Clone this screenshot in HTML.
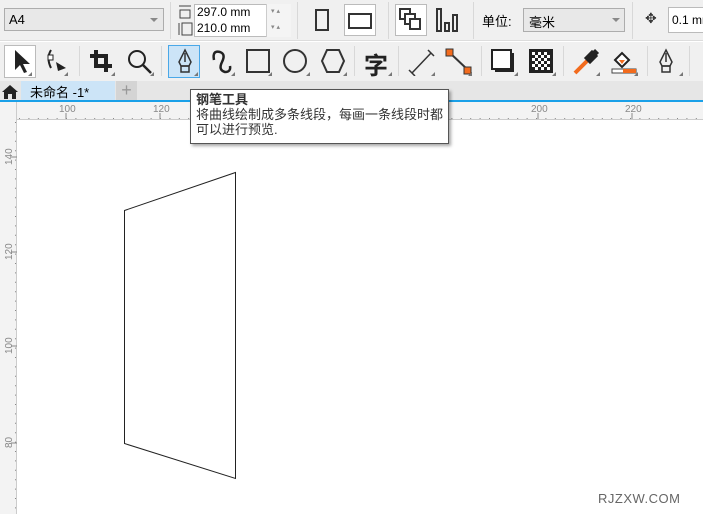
<!DOCTYPE html>
<html><head><meta charset="utf-8"><style>
*{margin:0;padding:0;box-sizing:border-box}
body{width:703px;height:514px;overflow:hidden;background:#fff;font-family:"Liberation Sans","Noto Sans CJK SC",sans-serif;position:relative}
.a{position:absolute;white-space:nowrap}
.sep{position:absolute;width:1px;background:#d8d8d8}
.tri{position:absolute;width:0;height:0;border-left:4px solid transparent;border-bottom:4px solid #777}
</style></head><body>
<!-- row1 -->
<div class="a" style="left:0;top:0;width:703px;height:41px;background:#f0f0f0;border-bottom:1px solid #dcdcdc"></div>
<div class="a" style="left:4px;top:8px;width:160px;height:23px;border:1px solid #adadad;background:#e8e8e8;font-size:13px;padding:3px 4px">A4</div>
<div class="a" style="left:150px;top:18px;border-left:4px solid transparent;border-right:4px solid transparent;border-top:4px solid #888"></div>
<div class="sep" style="left:170px;top:2px;height:37px"></div>
<svg class="a" style="left:177px;top:4px" width="16" height="32"><path d="M2 2h12M3 6h10v8H3z M2 19v12M5 19h10v12H5z" stroke="#444" fill="none"/></svg>
<div class="a" style="left:194px;top:4px;width:97px;height:33px;border:1px solid #bbb;background:#fff"></div>
<div class="a" style="left:197px;top:5px;font-size:12px">297.0 mm</div>
<div class="a" style="left:197px;top:21px;font-size:12px">210.0 mm</div>
<div class="a" style="left:266px;top:4px;width:25px;height:33px;border-left:1px solid #ccc;background:#f4f4f4;font-size:7px;color:#888;line-height:8px;padding:4px 0 0 4px">▾ ▴<br><br>▾ ▴</div>
<div class="sep" style="left:297px;top:2px;height:37px"></div>
<div class="a" style="left:315px;top:9px;width:14px;height:22px;border:2px solid #333"></div>
<div class="a" style="left:344px;top:4px;width:32px;height:32px;border:1px solid #bbb;background:#fff"></div>
<div class="a" style="left:348px;top:13px;width:24px;height:16px;border:2px solid #333"></div>
<div class="sep" style="left:388px;top:2px;height:37px"></div>
<div class="a" style="left:395px;top:4px;width:32px;height:32px;border:1px solid #bbb;background:#fff"></div>
<svg class="a" style="left:398px;top:7px" width="26" height="26"><path d="M2 2h10v10H2z" stroke="#333" stroke-width="2" fill="#fff"/><path d="M7 7h10v10H7z" stroke="#333" stroke-width="2" fill="#fff"/><path d="M12 12h10v10H12z" stroke="#333" stroke-width="2" fill="#fff"/></svg>
<svg class="a" style="left:435px;top:7px" width="26" height="26"><path d="M2 2h4v22H2z M10 16h4v8h-4z M18 8h4v16h-4z" stroke="#333" stroke-width="2" fill="none"/></svg>
<div class="sep" style="left:473px;top:2px;height:37px"></div>
<div class="a" style="left:482px;top:11px;font-size:13px">单位:</div>
<div class="a" style="left:523px;top:8px;width:102px;height:24px;border:1px solid #adadad;background:#e8e8e8;font-size:13px;padding:3px 5px">毫米</div>
<div class="a" style="left:612px;top:18px;border-left:4px solid transparent;border-right:4px solid transparent;border-top:4px solid #888"></div>
<div class="sep" style="left:632px;top:2px;height:37px"></div>
<div class="a" style="left:645px;top:10px;font-size:14px;color:#333">✥</div>
<div class="a" style="left:668px;top:7px;width:40px;height:26px;border:1px solid #bbb;background:#fff;font-size:12px;padding:5px 3px;overflow:hidden">0.1 mm</div>
<!-- row2 -->
<div class="a" style="left:0;top:42px;width:703px;height:39px;background:#f0f0f0"></div>
<div class="a" style="left:4px;top:45px;width:32px;height:33px;border:1px solid #bbb;background:#fff"></div>
<svg class="a" style="left:10px;top:48px" width="22" height="28"><path d="M5 2v20l5-5 4 8 3-1-4-8h7z" fill="#222"/></svg>
<svg class="a" style="left:44px;top:48px" width="26" height="28"><path d="M7 2q-5 8 0 18" stroke="#222" stroke-width="2" fill="none"/><rect x="4" y="7" width="5" height="5" fill="#fff" stroke="#222"/><path d="M12 14l10 6-8 3z" fill="#222"/></svg>
<div class="sep" style="left:79px;top:46px;height:30px"></div>
<svg class="a" style="left:88px;top:48px" width="28" height="28"><path d="M8 2v16h16M2 8h16v16" stroke="#222" stroke-width="4" fill="none"/></svg>
<svg class="a" style="left:126px;top:48px" width="28" height="28"><circle cx="11" cy="11" r="8" stroke="#222" stroke-width="2" fill="none"/><path d="M17 17l8 8" stroke="#222" stroke-width="2.5"/></svg>
<div class="sep" style="left:161px;top:46px;height:30px"></div>
<div class="a" style="left:168px;top:45px;width:32px;height:33px;border:1px solid #4aa8e8;background:#cce4f7"></div>
<svg class="a" style="left:175px;top:48px" width="20" height="28"><path d="M10 2l6 12-2 4H6l-2-4z M10 5v9" stroke="#333" stroke-width="1.5" fill="none"/><rect x="6" y="18" width="8" height="6" stroke="#333" stroke-width="1.5" fill="none"/></svg>
<svg class="a" style="left:206px;top:48px" width="28" height="28"><path d="M8 12q-2-10 6-8 6 2 2 10-4 8 3 10 6 0 5-6" stroke="#222" stroke-width="2.5" fill="none"/></svg>
<div class="a" style="left:246px;top:49px;width:24px;height:24px;border:2px solid #333"></div>
<div class="a" style="left:283px;top:49px;width:24px;height:24px;border:2px solid #333;border-radius:50%"></div>
<svg class="a" style="left:320px;top:48px" width="26" height="26"><path d="M7 2h12l5 11-5 11H7L2 13z" stroke="#333" stroke-width="2" fill="none"/></svg>
<div class="sep" style="left:354px;top:46px;height:30px"></div>
<div class="a" style="left:364px;top:46px;font-size:24px;font-weight:bold;color:#222">字</div>
<div class="sep" style="left:398px;top:46px;height:30px"></div>
<svg class="a" style="left:408px;top:48px" width="28" height="28"><path d="M4 25L23 5M1 22l6 6M20 2l6 6" stroke="#333" stroke-width="1.5"/></svg>
<svg class="a" style="left:445px;top:48px" width="28" height="28"><path d="M5 5l18 17" stroke="#333" stroke-width="2"/><rect x="1" y="1" width="7" height="7" fill="#f26b1d" stroke="#333"/><rect x="19" y="19" width="7" height="7" fill="#f26b1d" stroke="#333"/></svg>
<div class="sep" style="left:481px;top:46px;height:30px"></div>
<svg class="a" style="left:490px;top:48px" width="28" height="28"><rect x="2" y="2" width="19" height="19" stroke="#222" stroke-width="2" fill="#fff"/><path d="M22 5v17H5" stroke="#222" stroke-width="4" fill="none"/></svg>
<svg class="a" style="left:529px;top:49px" width="24" height="24"><rect width="24" height="24" fill="#222"/><g fill="#fff"><rect x="3" y="3" width="3" height="3"/><rect x="9" y="3" width="3" height="3"/><rect x="15" y="3" width="3" height="3"/><rect x="6" y="6" width="3" height="3"/><rect x="12" y="6" width="3" height="3"/><rect x="18" y="6" width="3" height="3"/><rect x="3" y="9" width="3" height="3"/><rect x="9" y="9" width="3" height="3"/><rect x="15" y="9" width="3" height="3"/><rect x="6" y="12" width="3" height="3"/><rect x="12" y="12" width="3" height="3"/><rect x="18" y="12" width="3" height="3"/><rect x="3" y="15" width="3" height="3"/><rect x="9" y="15" width="3" height="3"/><rect x="15" y="15" width="3" height="3"/><rect x="6" y="18" width="3" height="3"/><rect x="12" y="18" width="3" height="3"/><rect x="18" y="18" width="3" height="3"/></g></svg>
<div class="sep" style="left:563px;top:46px;height:30px"></div>
<svg class="a" style="left:572px;top:48px" width="28" height="28"><path d="M3 25L16 12" stroke="#f26b1d" stroke-width="4"/><path d="M14 10l6-6 4 4-6 6z M22 2l4 4" stroke="#222" stroke-width="3" fill="#222"/></svg>
<svg class="a" style="left:610px;top:48px" width="28" height="28"><path d="M5 12l7-7 7 7-7 7z" stroke="#222" stroke-width="2" fill="#fff"/><path d="M9 12l3 4 3-4z" fill="#f26b1d"/><rect x="2" y="21" width="24" height="4" fill="#fff" stroke="#444"/><rect x="13" y="21" width="13" height="4" fill="#f26b1d"/></svg>
<div class="sep" style="left:647px;top:46px;height:30px"></div>
<svg class="a" style="left:656px;top:48px" width="20" height="28"><path d="M10 2l6 12-2 4H6l-2-4z M10 5v9" stroke="#333" stroke-width="1.5" fill="none"/><rect x="6" y="18" width="8" height="6" stroke="#333" stroke-width="1.5" fill="none"/></svg>
<div class="sep" style="left:689px;top:46px;height:30px"></div>
<div class="tri" style="left:28px;top:72px"></div><div class="tri" style="left:64px;top:72px"></div><div class="tri" style="left:111px;top:72px"></div><div class="tri" style="left:150px;top:72px"></div><div class="tri" style="left:194px;top:72px"></div><div class="tri" style="left:231px;top:72px"></div><div class="tri" style="left:268px;top:72px"></div><div class="tri" style="left:306px;top:72px"></div><div class="tri" style="left:343px;top:72px"></div><div class="tri" style="left:388px;top:72px"></div><div class="tri" style="left:431px;top:72px"></div><div class="tri" style="left:468px;top:72px"></div><div class="tri" style="left:514px;top:72px"></div><div class="tri" style="left:552px;top:72px"></div><div class="tri" style="left:596px;top:72px"></div><div class="tri" style="left:634px;top:72px"></div><div class="tri" style="left:679px;top:72px"></div>
<!-- tabs -->
<div class="a" style="left:0;top:81px;width:703px;height:21px;background:#e6e6e6;border-bottom:2px solid #1aa0e8"></div>
<svg class="a" style="left:1px;top:84px" width="18" height="16"><path d="M1 8L9 1l8 7h-2v7h-4v-5H7v5H3V8z" fill="#222"/></svg>
<div class="a" style="left:21px;top:81px;width:94px;height:19px;background:#cce4f7;font-size:13px;padding:1px 9px">未命名 -1*</div>
<div class="a" style="left:116px;top:81px;width:21px;height:19px;background:#d4d4d4;color:#999;font-size:18px;text-align:center;line-height:19px">+</div>
<!-- rulers -->
<div class="a" style="left:0;top:102px;width:703px;height:18px;background:#f3f3f3;border-bottom:1px solid #ccc"></div>
<div class="a" style="left:0;top:102px;width:17px;height:412px;background:#f3f3f3;border-right:1px solid #ccc"></div>
<svg class="a" style="left:0;top:102px" width="703" height="412" font-family="Liberation Sans" font-size="10" fill="#888">
<g stroke="#888" stroke-width="1">
<path d="M66 11v6M160 11v6M254 11v6M348 11v6M442 11v6M538 11v6M632 11v6" />
<path stroke-dasharray="1 8.4" d="M19 16.5H703"/>
<path d="M11 55h6M11 150h6M11 244h6M11 341h6"/>
<path stroke-dasharray="1 8.4" d="M15.5 20V412"/>
</g>
<text x="59" y="10">100</text><text x="153" y="10">120</text><text x="531" y="10">200</text><text x="625" y="10">220</text>
<text transform="translate(12 63) rotate(-90)">140</text><text transform="translate(12 158) rotate(-90)">120</text><text transform="translate(12 252) rotate(-90)">100</text><text transform="translate(12 346) rotate(-90)">80</text>
</svg>
<svg class="a" style="left:0;top:0" width="703" height="514"><path d="M124.5 210.5L235.5 172.5V478.5L124.5 443.5Z" stroke="#222" fill="none"/></svg>
<!-- tooltip -->
<div class="a" style="left:190px;top:89px;width:259px;height:55px;background:#fff;border:1px solid #555;box-shadow:2px 2px 3px rgba(0,0,0,.35);padding:2px 5px;font-size:13px;line-height:15px;color:#333">
<b>钢笔工具</b><br>将曲线绘制成多条线段，每画一条线段时都<br>可以进行预览.</div>
<div class="a" style="left:598px;top:491px;font-size:13px;color:#666;letter-spacing:0.5px">RJZXW.COM</div>
</body></html>
